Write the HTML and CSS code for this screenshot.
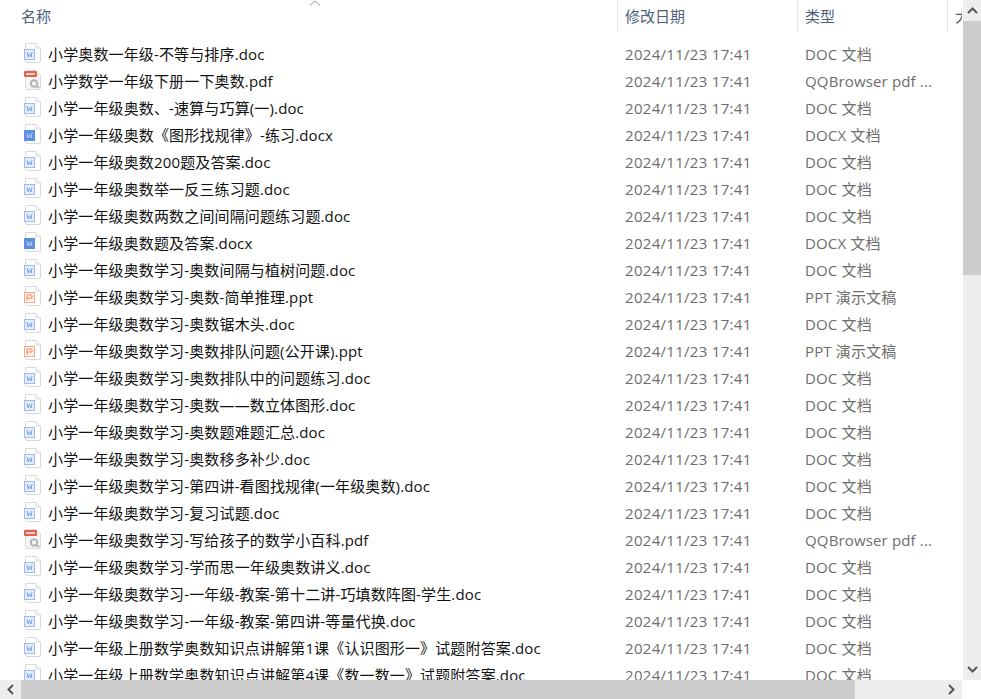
FILE: index.html
```html
<!DOCTYPE html>
<html lang="zh-CN">
<head>
  <meta charset="UTF-8" />
  <title>小学奥数</title>
  <link rel="stylesheet" href="styles.css">
</head>
<body>
  <svg class="defs" width="0" height="0">
    <symbol id="page" viewBox="0 0 18 20">
      <path d="M1.500 .5H12L16.500 5V18a1.500 1.500 0 0 1-1.500 1.500H3A1.500 1.500 0 0 1 1.500 18Z" fill="#fff" stroke="#d9d9d9"/>
      <path d="M12 .5V5H16.500" fill="#f4f4f4" stroke="#dcdcdc"/>
    </symbol>
    <symbol id="doc" viewBox="0 0 18 20">
      <use href="#page"/>
      <rect x=".5" y="6.500" width="10" height="10" fill="#e4edfb" stroke="#9dbcee"/>
      <path d="M3 9l1 5 1.500-3.500L7 14l1-5" fill="none" stroke="#7ea4e4"/>
    </symbol>
    <symbol id="docx" viewBox="0 0 18 20">
      <use href="#page"/>
      <rect y="6" width="11" height="11" fill="#5f8fe2"/>
      <path d="M3 9l1 5 1.500-3.500L7 14l1-5" fill="none" stroke="#b7cdf3"/>
    </symbol>
    <symbol id="ppt" viewBox="0 0 18 20">
      <use href="#page"/>
      <rect x=".5" y="6.500" width="10" height="10" fill="#fdf0e9" stroke="#f0aa88"/>
      <path d="M3 14.500V9H8V12H3" fill="none" stroke="#ec8a5c"/>
    </symbol>
    <symbol id="pdf" viewBox="0 0 18 20">
      <path d="M1.500 .5H12L16.500 5V18a1.500 1.500 0 0 1-1.500 1.500H3A1.500 1.500 0 0 1 1.500 18Z" fill="#f5f5f5" stroke="#dcdcdc"/>
      <rect y="1" width="13" height="6" rx="1" fill="#e2604f"/>
      <rect x="2" y="3" width="9" height="2" fill="#f6cfc9"/>
      <circle cx="10" cy="13.500" r="3.200" fill="none" stroke="#b4b4b4" stroke-width="2"/>
      <path d="M12 15.500L15 18" stroke="#b4b4b4" stroke-width="2"/>
    </symbol>
  </svg>

  <div class="window">
    <div class="main">
      <div class="pane">
        <div class="header">
          <div class="col col-name">名称<span class="sort"><svg width="12" height="6" viewBox="0 0 12 6"><path d="M1 5.500L6 .8 11 5.500" fill="none" stroke="#9a9a9a"/></svg></span></div>
          <div class="col col-date">修改日期</div>
          <div class="col col-type">类型</div>
          <div class="col col-size">大小</div>
        </div>
        <div class="rows">
          <div class="row"><span class="name"><svg class="icon"><use href="#doc"/></svg>小学奥数一年级-不等与排序.doc</span><span class="date">2024/11/23 17:41</span><span class="type">DOC 文档</span></div>
          <div class="row"><span class="name"><svg class="icon"><use href="#pdf"/></svg>小学数学一年级下册一下奥数.pdf</span><span class="date">2024/11/23 17:41</span><span class="type">QQBrowser pdf ...</span></div>
          <div class="row"><span class="name"><svg class="icon"><use href="#doc"/></svg>小学一年级奥数、-速算与巧算(一).doc</span><span class="date">2024/11/23 17:41</span><span class="type">DOC 文档</span></div>
          <div class="row"><span class="name"><svg class="icon"><use href="#docx"/></svg>小学一年级奥数《图形找规律》-练习.docx</span><span class="date">2024/11/23 17:41</span><span class="type">DOCX 文档</span></div>
          <div class="row"><span class="name"><svg class="icon"><use href="#doc"/></svg>小学一年级奥数200题及答案.doc</span><span class="date">2024/11/23 17:41</span><span class="type">DOC 文档</span></div>
          <div class="row"><span class="name"><svg class="icon"><use href="#doc"/></svg>小学一年级奥数举一反三练习题.doc</span><span class="date">2024/11/23 17:41</span><span class="type">DOC 文档</span></div>
          <div class="row"><span class="name"><svg class="icon"><use href="#doc"/></svg>小学一年级奥数两数之间间隔问题练习题.doc</span><span class="date">2024/11/23 17:41</span><span class="type">DOC 文档</span></div>
          <div class="row"><span class="name"><svg class="icon"><use href="#docx"/></svg>小学一年级奥数题及答案.docx</span><span class="date">2024/11/23 17:41</span><span class="type">DOCX 文档</span></div>
          <div class="row"><span class="name"><svg class="icon"><use href="#doc"/></svg>小学一年级奥数学习-奥数间隔与植树问题.doc</span><span class="date">2024/11/23 17:41</span><span class="type">DOC 文档</span></div>
          <div class="row"><span class="name"><svg class="icon"><use href="#ppt"/></svg>小学一年级奥数学习-奥数-简单推理.ppt</span><span class="date">2024/11/23 17:41</span><span class="type">PPT 演示文稿</span></div>
          <div class="row"><span class="name"><svg class="icon"><use href="#doc"/></svg>小学一年级奥数学习-奥数锯木头.doc</span><span class="date">2024/11/23 17:41</span><span class="type">DOC 文档</span></div>
          <div class="row"><span class="name"><svg class="icon"><use href="#ppt"/></svg>小学一年级奥数学习-奥数排队问题(公开课).ppt</span><span class="date">2024/11/23 17:41</span><span class="type">PPT 演示文稿</span></div>
          <div class="row"><span class="name"><svg class="icon"><use href="#doc"/></svg>小学一年级奥数学习-奥数排队中的问题练习.doc</span><span class="date">2024/11/23 17:41</span><span class="type">DOC 文档</span></div>
          <div class="row"><span class="name"><svg class="icon"><use href="#doc"/></svg>小学一年级奥数学习-奥数——数立体图形.doc</span><span class="date">2024/11/23 17:41</span><span class="type">DOC 文档</span></div>
          <div class="row"><span class="name"><svg class="icon"><use href="#doc"/></svg>小学一年级奥数学习-奥数题难题汇总.doc</span><span class="date">2024/11/23 17:41</span><span class="type">DOC 文档</span></div>
          <div class="row"><span class="name"><svg class="icon"><use href="#doc"/></svg>小学一年级奥数学习-奥数移多补少.doc</span><span class="date">2024/11/23 17:41</span><span class="type">DOC 文档</span></div>
          <div class="row"><span class="name"><svg class="icon"><use href="#doc"/></svg>小学一年级奥数学习-第四讲-看图找规律(一年级奥数).doc</span><span class="date">2024/11/23 17:41</span><span class="type">DOC 文档</span></div>
          <div class="row"><span class="name"><svg class="icon"><use href="#doc"/></svg>小学一年级奥数学习-复习试题.doc</span><span class="date">2024/11/23 17:41</span><span class="type">DOC 文档</span></div>
          <div class="row"><span class="name"><svg class="icon"><use href="#pdf"/></svg>小学一年级奥数学习-写给孩子的数学小百科.pdf</span><span class="date">2024/11/23 17:41</span><span class="type">QQBrowser pdf ...</span></div>
          <div class="row"><span class="name"><svg class="icon"><use href="#doc"/></svg>小学一年级奥数学习-学而思一年级奥数讲义.doc</span><span class="date">2024/11/23 17:41</span><span class="type">DOC 文档</span></div>
          <div class="row"><span class="name"><svg class="icon"><use href="#doc"/></svg>小学一年级奥数学习-一年级-教案-第十二讲-巧填数阵图-学生.doc</span><span class="date">2024/11/23 17:41</span><span class="type">DOC 文档</span></div>
          <div class="row"><span class="name"><svg class="icon"><use href="#doc"/></svg>小学一年级奥数学习-一年级-教案-第四讲-等量代换.doc</span><span class="date">2024/11/23 17:41</span><span class="type">DOC 文档</span></div>
          <div class="row"><span class="name"><svg class="icon"><use href="#doc"/></svg>小学一年级上册数学奥数知识点讲解第1课《认识图形一》试题附答案.doc</span><span class="date">2024/11/23 17:41</span><span class="type">DOC 文档</span></div>
          <div class="row"><span class="name"><svg class="icon"><use href="#doc"/></svg>小学一年级上册数学奥数知识点讲解第4课《数一数一》试题附答案.doc</span><span class="date">2024/11/23 17:41</span><span class="type">DOC 文档</span></div>
        </div>
      </div>
      <div class="vbar">
        <div class="arrow"><svg width="11" height="7" viewBox="0 0 11 7"><path d="M1 6L5.500 1.500 10 6" fill="none" stroke="#555" stroke-width="2"/></svg></div>
        <div class="vthumb"></div>
        <div class="vtrack"></div>
        <div class="arrow"><svg width="11" height="7" viewBox="0 0 11 7"><path d="M1 1L5.500 5.500 10 1" fill="none" stroke="#555" stroke-width="2"/></svg></div>
      </div>
    </div>
    <div class="hbar">
      <div class="arrow-h"><svg width="7" height="11" viewBox="0 0 7 11"><path d="M6 1L1.500 5.500 6 10" fill="none" stroke="#555" stroke-width="2"/></svg></div>
      <div class="hthumb"></div>
      <div class="htrack"></div>
      <div class="arrow-h"><svg width="7" height="11" viewBox="0 0 7 11"><path d="M1 1L5.500 5.500 1 10" fill="none" stroke="#555" stroke-width="2"/></svg></div>
      <div class="corner"></div>
    </div>
  </div>
</body>
</html>
```

FILE: styles.css
```css
html, body {
  margin: 0;
  height: 100%;
  overflow: hidden;
  background: #fff;
  font-family: "Open Sans", "Noto Sans CJK SC", sans-serif;
}

.defs {
  position: absolute;
}

.window {
  display: flex;
  flex-direction: column;
  height: 699px;
}

.main {
  display: flex;
  flex: 1;
  min-height: 0;
}

.pane {
  flex: 1;
  min-width: 0;
  overflow: hidden;
}

/* column header */
.header {
  display: flex;
  height: 32px;
  font-size: 15px;
  line-height: 32px;
  color: #4c607a;
}

.col {
  box-sizing: border-box;
  border-right: 1px solid #e5e5e5;
  padding-left: 7px;
  white-space: nowrap;
  overflow: hidden;
}

.col-name {
  position: relative;
  width: 618px;
  padding-left: 21px;
}

.sort {
  position: absolute;
  top: 0;
  left: 309px;
  line-height: 0;
}

.col-date {
  width: 180px;
}

.col-type {
  width: 150px;
}

.col-size {
  flex: 1;
  border-right: none;
}

/* file rows */
.rows {
  padding-top: 9px;
}

.row {
  display: flex;
  height: 27px;
  line-height: 27px;
  font-size: 15px;
  white-space: nowrap;
}

.name {
  display: flex;
  align-items: center;
  width: 618px;
  padding-left: 24px;
  box-sizing: border-box;
  color: #111;
  letter-spacing: .14px;
}

.icon {
  flex: none;
  width: 18px;
  height: 20px;
  margin-right: 6px;
  margin-top: -3px;
}

.date {
  width: 180px;
  padding-left: 7px;
  box-sizing: border-box;
  color: #6d6d6d;
  letter-spacing: .3px;
}

.type {
  padding-left: 7px;
  color: #6d6d6d;
  letter-spacing: .15px;
}

/* scrollbars */
.vbar {
  display: flex;
  flex-direction: column;
  width: 18px;
  margin-left: 1px;
  background: #eee;
}

.arrow {
  display: flex;
  align-items: center;
  justify-content: center;
  height: 21px;
}

.vthumb {
  height: 254px;
  background: #cdcdcd;
}

.vtrack {
  flex: 1;
}

.hbar {
  display: flex;
  height: 19px;
  background: #eee;
}

.arrow-h {
  display: flex;
  align-items: center;
  justify-content: center;
  width: 21px;
}

.hthumb {
  width: 834px;
  background: #cdcdcd;
}

.htrack {
  flex: 1;
}

.corner {
  width: 19px;
  background: #fff;
}
```
